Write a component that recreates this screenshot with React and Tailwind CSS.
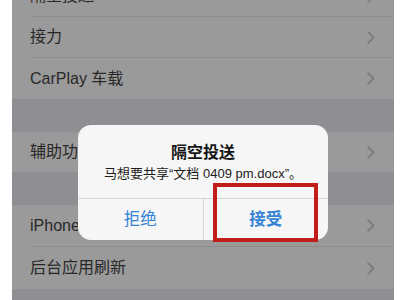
const font = { fontFamily: '"Liberation Sans", "Noto Sans CJK SC", sans-serif' };

const Chevron = () => (
  <svg width="8" height="13" viewBox="0 0 8 13" fill="none">
    <path d="M1.2 1.2L6.5 6.5L1.2 11.8" stroke="#7c7c7e" strokeWidth="1.9" strokeLinecap="round" strokeLinejoin="round" />
  </svg>
);

const Row = ({ label, h = "h-[41px]", last }) => (
  <div className={`${h} pl-[18px] flex`}>
    <div className={`flex-1 flex items-center justify-between pr-[19px] ${last ? "" : "border-b border-[#8d8d8f]"}`}>
      <span className="text-[16px] text-[#282828]">{label}</span>
      <Chevron />
    </div>
  </div>
);

export default function App() {
  return (
    <div className="relative w-[400px] h-[300px] bg-white overflow-hidden" style={font}>
      <div className="ml-[12px] w-[382px] h-[300px] bg-[#8f8f93] flex flex-col">
        {/* first group, scrolled partly out of view */}
        <div className="-mt-[24px] bg-[#9a9a9a] flex flex-col">
          <Row label="隔空投送" />
          <Row label="接力" />
          <Row label="CarPlay 车载" last />
        </div>
        <div className="h-[33px] shrink-0" />
        <div className="bg-[#9a9a9a]">
          <Row label="辅助功能" h="h-[40px]" last />
        </div>
        <div className="h-[33px] shrink-0" />
        <div className="bg-[#9a9a9a] flex flex-col">
          <Row label="iPhone 储存空间" h="h-[42px]" />
          <Row label="后台应用刷新" h="h-[42px]" last />
        </div>
      </div>

      {/* alert */}
      <div className="absolute left-[78px] top-[125px] w-[250px] h-[115px] rounded-[13px] bg-[#f6f6f6] flex flex-col">
        <div className="h-[74px] flex flex-col items-center pt-[17px] border-b border-[#d6d6d8]">
          <div className="text-[16px] font-semibold text-[#151515] leading-[22px]">隔空投送</div>
          <div className="text-[13px] text-[#1c1c1c] leading-[18px] mt-[1px]">马想要共享“文档 0409 pm.docx”。</div>
        </div>
        <div className="flex-1 flex">
          <div className="flex-1 flex items-center justify-center border-r border-[#d6d6d8] text-[16.5px] text-[#3583d6]">拒绝</div>
          <div className="flex-1 flex items-center justify-center text-[16.5px] font-semibold text-[#3583d6]">接受</div>
        </div>
      </div>

      {/* highlight box */}
      <div className="absolute left-[213px] top-[183px] w-[105px] h-[59px] border-[4px] border-[#c11d1b]" />
    </div>
  );
}
